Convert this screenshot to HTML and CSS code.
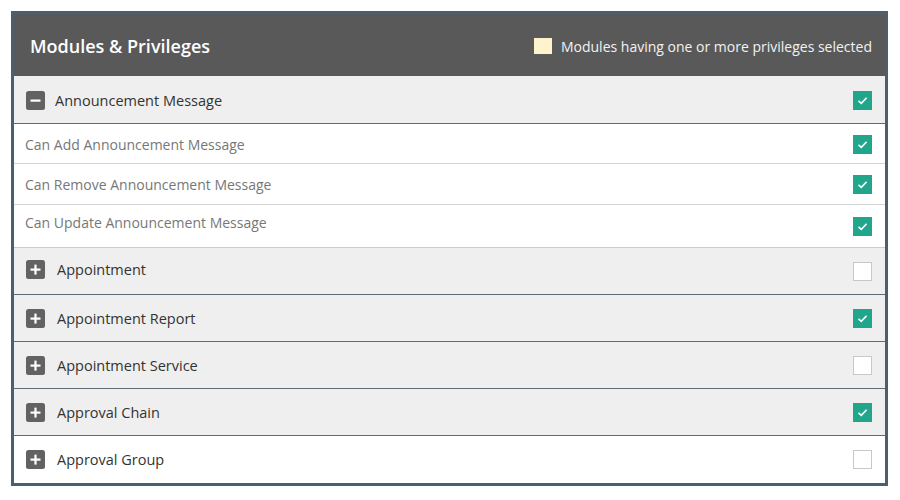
FILE: index.html
```html
<!DOCTYPE html>
<html>
<head>
<meta charset="utf-8">
<link rel="stylesheet" href="styles.css">
</head>
<body>
<div class="panel">
  <div class="header">
    <div class="title">Modules &amp; Privileges</div>
    <div class="legend"><span class="swatch"></span><span>Modules having one or more privileges selected</span></div>
  </div>
  <div class="module first">
    <span class="toggle"><svg width="19" height="19" viewBox="0 0 19 19"><rect x="0" y="0" width="19" height="19" rx="2.5" fill="#626262"/><rect x="4.5" y="8.5" width="10" height="2.2" fill="#fff"/></svg></span>
    <span class="mname">Announcement Message</span>
    <span class="cb on"><svg width="19" height="19" viewBox="0 0 19 19"><path d="M5.5 9.8 L8.3 12.4 L13.6 6.8" fill="none" stroke="#fff" stroke-width="1.6"/></svg></span>
  </div>
  <div class="privs">
    <div class="priv p1"><span class="pname">Can Add Announcement Message</span><span class="cb on"><svg width="19" height="19" viewBox="0 0 19 19"><path d="M5.5 9.8 L8.3 12.4 L13.6 6.8" fill="none" stroke="#fff" stroke-width="1.6"/></svg></span></div>
    <div class="priv p2"><span class="pname">Can Remove Announcement Message</span><span class="cb on"><svg width="19" height="19" viewBox="0 0 19 19"><path d="M5.5 9.8 L8.3 12.4 L13.6 6.8" fill="none" stroke="#fff" stroke-width="1.6"/></svg></span></div>
    <div class="priv p3"><span class="pname">Can Update Announcement Message</span><span class="cb on cb-low"><svg width="19" height="19" viewBox="0 0 19 19"><path d="M5.5 9.8 L8.3 12.4 L13.6 6.8" fill="none" stroke="#fff" stroke-width="1.6"/></svg></span></div>
  </div>
  <div class="module after-privs">
    <span class="toggle"><svg width="19" height="19" viewBox="0 0 19 19"><rect x="0" y="0" width="19" height="19" rx="2.5" fill="#626262"/><rect x="4.5" y="8.5" width="10" height="2.2" fill="#fff"/><rect x="8.4" y="4.6" width="2.2" height="10" fill="#fff"/></svg></span>
    <span class="mname plus">Appointment</span>
    <span class="cb cb-low"></span>
  </div>
  <div class="module">
    <span class="toggle"><svg width="19" height="19" viewBox="0 0 19 19"><rect x="0" y="0" width="19" height="19" rx="2.5" fill="#626262"/><rect x="4.5" y="8.5" width="10" height="2.2" fill="#fff"/><rect x="8.4" y="4.6" width="2.2" height="10" fill="#fff"/></svg></span>
    <span class="mname plus">Appointment Report</span>
    <span class="cb on"><svg width="19" height="19" viewBox="0 0 19 19"><path d="M5.5 9.8 L8.3 12.4 L13.6 6.8" fill="none" stroke="#fff" stroke-width="1.6"/></svg></span>
  </div>
  <div class="module">
    <span class="toggle"><svg width="19" height="19" viewBox="0 0 19 19"><rect x="0" y="0" width="19" height="19" rx="2.5" fill="#626262"/><rect x="4.5" y="8.5" width="10" height="2.2" fill="#fff"/><rect x="8.4" y="4.6" width="2.2" height="10" fill="#fff"/></svg></span>
    <span class="mname plus">Appointment Service</span>
    <span class="cb"></span>
  </div>
  <div class="module">
    <span class="toggle"><svg width="19" height="19" viewBox="0 0 19 19"><rect x="0" y="0" width="19" height="19" rx="2.5" fill="#626262"/><rect x="4.5" y="8.5" width="10" height="2.2" fill="#fff"/><rect x="8.4" y="4.6" width="2.2" height="10" fill="#fff"/></svg></span>
    <span class="mname plus">Approval Chain</span>
    <span class="cb on"><svg width="19" height="19" viewBox="0 0 19 19"><path d="M5.5 9.8 L8.3 12.4 L13.6 6.8" fill="none" stroke="#fff" stroke-width="1.6"/></svg></span>
  </div>
  <div class="module white last">
    <span class="toggle"><svg width="19" height="19" viewBox="0 0 19 19"><rect x="0" y="0" width="19" height="19" rx="2.5" fill="#626262"/><rect x="4.5" y="8.5" width="10" height="2.2" fill="#fff"/><rect x="8.4" y="4.6" width="2.2" height="10" fill="#fff"/></svg></span>
    <span class="mname plus">Approval Group</span>
    <span class="cb"></span>
  </div>
</div>
</body>
</html>
```

FILE: styles.css
```css
html, body {
  margin: 0;
  padding: 0;
  background: #ffffff;
  font-family: "Open Sans", "Liberation Sans", sans-serif;
}
.panel {
  margin: 11px 0 0 11px;
  width: 871px;
  border: 3px solid #4b5f6e;
  box-sizing: content-box;
}
.header {
  height: 62px;
  box-sizing: border-box;
  padding: 2px 13px 0 16px;
  background: #595959;
  display: flex;
  align-items: center;
  justify-content: space-between;
}
.title {
  color: #ffffff;
  font-size: 18px;
  font-weight: 600;
}
.legend {
  display: flex;
  align-items: center;
  gap: 9px;
  color: #f2f2f2;
  font-size: 14px;
}
.swatch {
  width: 18px;
  height: 16px;
  background: #fff3cd;
}
.module {
  height: 46px;
  box-sizing: content-box;
  display: flex;
  align-items: center;
  padding: 0 13px 0 12px;
  background: #efefef;
  border-top: 1px solid #5f6c76;
}
.module.first {
  border-top: none;
  padding-top: 1px;
  height: 46px;
}
.module.after-privs {
  border-top: 1px solid #cccccc;
  height: 43px;
  padding-bottom: 3px;
}
.module.white {
  background: #ffffff;
}
.module.last {
  height: 47px;
}
.toggle {
  width: 19px;
  height: 19px;
  display: flex;
}
.mname {
  flex: 1;
  margin-left: 10px;
  font-size: 14.5px;
  color: #333333;
}
.mname.plus {
  margin-left: 12px;
}
.privs {
  border-top: 1px solid #5f6c76;
}
.priv {
  display: flex;
  align-items: center;
  padding: 0 13px 0 11px;
  background: #ffffff;
}
.priv + .priv {
  border-top: 1px solid #d4d4d4;
}
.priv.p1 {
  height: 39px;
  padding-top: 1px;
  height: 38px;
}
.priv.p2 {
  height: 40px;
}
.priv.p3 {
  height: 34px;
  padding-bottom: 8px;
}
.cb-low {
  margin-top: 8px;
}
.module .cb-low {
  margin-top: 3px;
}
.pname {
  flex: 1;
  font-size: 14px;
  color: #777777;
}
.cb {
  width: 19px;
  height: 19px;
  box-sizing: border-box;
  border: 1px solid #c8c8c8;
  background: #ffffff;
  display: flex;
}
.cb.on {
  border: none;
  background: #21a68b;
}
```
